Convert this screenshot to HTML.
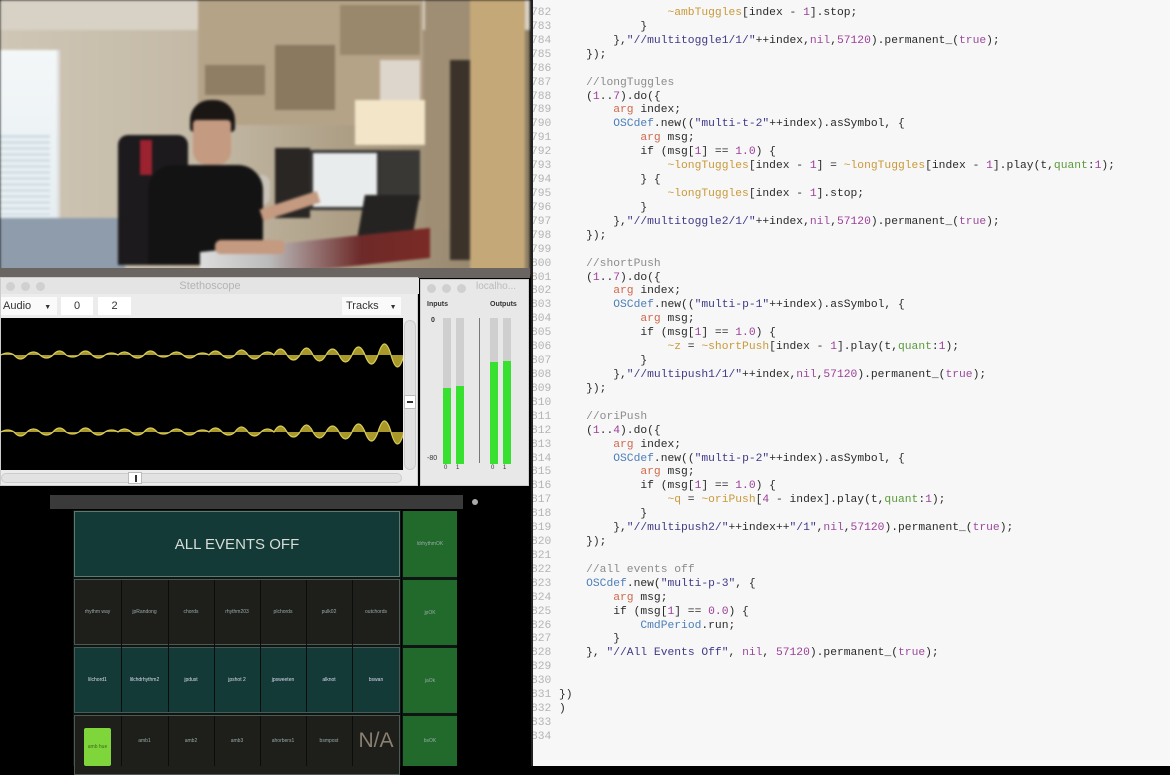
<!DOCTYPE html>
<html><head><meta charset="utf-8">
<style>
*{margin:0;padding:0;box-sizing:border-box}
body{width:1170px;height:766px;overflow:hidden;background:#000;position:relative;font-family:"Liberation Sans",sans-serif}
.a{position:absolute}
#ed{left:533px;top:0;width:637px;height:766px;background:#f7f7f7}
pre{font-family:"Liberation Mono",monospace;font-size:11.3px;line-height:13.92px;position:absolute;margin:0}
#ln{left:-2px;top:7px;color:#b4b4b4;width:20px;overflow:hidden;text-align:right}
#code{left:26px;top:7px;color:#2a2a2a}
.c{color:#8c8c8c}.k{color:#d0684c}.o{color:#4d7fb8}.s{color:#3f3a86}.n{color:#9b3f98}.e{color:#c99a3a}.q{color:#5c9a3a}.p{color:#9b4a9b}
.cell{position:absolute;color:#9aa;font-size:5px;display:flex;align-items:center;justify-content:center;text-align:center}
</style></head><body>

<!-- photo -->
<div class="a" style="left:0;top:0;width:530px;height:276px;background:linear-gradient(90deg,#cfc6b6,#c2b8a4 40%,#a99a80 70%,#8d7e66);overflow:hidden;filter:blur(1.2px)">
 <div class="a" style="left:0;top:0;width:530px;height:30px;background:#d8d2c6"></div>
 <div class="a" style="left:0;top:50px;width:60px;height:170px;background:linear-gradient(#f4f7f8,#e6eef2);border-right:3px solid #ddd"></div>
 <div class="a" style="left:0;top:135px;width:50px;height:80px;background:repeating-linear-gradient(#cfdde4 0 3px,#eef3f5 3px 6px)"></div>
 <div class="a" style="left:198px;top:0;width:225px;height:125px;background:#b5a388"></div>
 <div class="a" style="left:205px;top:65px;width:60px;height:30px;background:#8f7d64"></div>
 <div class="a" style="left:275px;top:45px;width:60px;height:65px;background:#8a785f"></div>
 <div class="a" style="left:340px;top:5px;width:80px;height:50px;background:#9a886c"></div>
 <div class="a" style="left:380px;top:60px;width:40px;height:40px;background:#ddd6cc"></div>
 <div class="a" style="left:355px;top:100px;width:70px;height:45px;background:#f3e6c8"></div>
 <div class="a" style="left:425px;top:0;width:45px;height:230px;background:#9f8e74"></div>
 <div class="a" style="left:450px;top:60px;width:20px;height:200px;background:#3b332a"></div>
 <div class="a" style="left:470px;top:0;width:55px;height:270px;background:#c4a878"></div>
 <div class="a" style="left:0;top:218px;width:125px;height:58px;background:#8e9cab"></div>
 <div class="a" style="left:118px;top:135px;width:70px;height:130px;background:#1c1a1c;border-radius:10px 10px 0 0"></div>
 <div class="a" style="left:140px;top:140px;width:12px;height:35px;background:#9c2230"></div>
 <div class="a" style="left:240px;top:175px;width:30px;height:30px;background:#c9c2b8;border-radius:8px"></div>
 <div class="a" style="left:275px;top:148px;width:35px;height:70px;background:#2a2624"></div>
 <div class="a" style="left:310px;top:150px;width:70px;height:60px;background:#e9ecec;border:3px solid #333"></div>
 <div class="a" style="left:380px;top:150px;width:40px;height:50px;background:#3a3834"></div>
 <div class="a" style="left:360px;top:195px;width:55px;height:55px;background:#252322;transform:skewX(-10deg)"></div>
 <div class="a" style="left:190px;top:100px;width:45px;height:32px;background:#1a1614;border-radius:20px 20px 4px 4px"></div>
 <div class="a" style="left:193px;top:120px;width:38px;height:45px;background:#c49a80;border-radius:4px 4px 14px 14px"></div>
 <div class="a" style="left:148px;top:165px;width:115px;height:100px;background:#141313;border-radius:25px 25px 0 0"></div>
 <div class="a" style="left:260px;top:200px;width:60px;height:12px;background:#c49a80;transform:rotate(-18deg)"></div>
 <div class="a" style="left:200px;top:240px;width:230px;height:30px;background:linear-gradient(90deg,#ddd,#bbb 30%,#6d2a28 70%,#7a2a26);transform:skewY(-6deg)"></div>
 <div class="a" style="left:215px;top:240px;width:70px;height:14px;background:#c49a80;border-radius:6px"></div>
</div>
<div class="a" style="left:0;top:268px;width:530px;height:10px;background:#6a6560"></div>

<!-- stethoscope -->
<div class="a" style="left:0;top:277px;width:418px;height:209px;background:#ececec;border:1px solid #ccc">
 <div class="a" style="left:0;top:0;width:418px;height:16px;background:#e4e4e4;color:#b4b4b4;font-size:11px;text-align:center;line-height:16px">Stethoscope</div>
 <div class="a" style="left:5px;top:4px;width:9px;height:9px;border-radius:50%;background:#d0d0d0"></div>
 <div class="a" style="left:20px;top:4px;width:9px;height:9px;border-radius:50%;background:#d0d0d0"></div>
 <div class="a" style="left:35px;top:4px;width:9px;height:9px;border-radius:50%;background:#d0d0d0"></div>
 <div class="a" style="left:0;top:19px;width:56px;height:18px;background:#fafafa;font-size:11px;line-height:18px;padding-left:2px;color:#333">Audio <span style="font-size:7px;margin-left:10px">▼</span></div>
 <div class="a" style="left:60px;top:19px;width:32px;height:18px;background:#fff;font-size:11px;line-height:18px;text-align:center;color:#333">0</div>
 <div class="a" style="left:97px;top:19px;width:33px;height:18px;background:#fff;font-size:11px;line-height:18px;text-align:center;color:#333">2</div>
 <div class="a" style="left:341px;top:19px;width:59px;height:18px;background:#fafafa;font-size:11px;line-height:18px;padding-left:4px;color:#333">Tracks <span style="font-size:7px;margin-left:8px">▼</span></div>
 <div class="a" style="left:0;top:40px;width:402px;height:152px;background:#000">
  <svg width="402" height="152" style="position:absolute;left:0;top:0">
   <g fill="#a8982a" stroke="#d8cc5a" stroke-width="1.2">
   <path transform="translate(0,37)" d="M0,0 Q6.5,-4 13,0 Q19.5,8 26,0 Q32.5,-6 39,0 Q45.5,6 52,0 Q58.5,-8 65,0 Q71.5,4 78,0 Q84.5,-8 91,0 Q97.5,6 104,0 Q110.5,-4 117,0 Q123.5,-6 130,0 Q136.5,6 143,0 Q149.5,-8 156,0 Q162.5,4 169,0 Q175.5,-6 182,0 Q188.5,6 195,0 Q201.5,-4 208,0 Q214.5,-8 221,0 Q227.5,6 234,0 Q240.5,-10 247,0 Q253.5,8 260,0 Q266.5,-6 273,0 Q279.5,-12 286,0 Q292.5,10 299,0 Q305.5,-14 312,0 Q318.5,12 325,0 Q331.5,-12 338,0 Q344.5,14 351,0 Q357.5,-16 364,0 Q370.5,18 377,0 Q383.5,-22 390,0 Q396.5,24 403,0"/>
   <path transform="translate(0,114)" d="M0,0 Q6.5,-4 13,0 Q19.5,8 26,0 Q32.5,-6 39,0 Q45.5,6 52,0 Q58.5,-8 65,0 Q71.5,4 78,0 Q84.5,-8 91,0 Q97.5,6 104,0 Q110.5,-4 117,0 Q123.5,-6 130,0 Q136.5,6 143,0 Q149.5,-8 156,0 Q162.5,4 169,0 Q175.5,-6 182,0 Q188.5,6 195,0 Q201.5,-4 208,0 Q214.5,-8 221,0 Q227.5,6 234,0 Q240.5,-10 247,0 Q253.5,8 260,0 Q266.5,-6 273,0 Q279.5,-12 286,0 Q292.5,10 299,0 Q305.5,-14 312,0 Q318.5,12 325,0 Q331.5,-12 338,0 Q344.5,14 351,0 Q357.5,-16 364,0 Q370.5,18 377,0 Q383.5,-22 390,0 Q396.5,24 403,0"/>
   </g>
  </svg>
 </div>
 <div class="a" style="left:403px;top:42px;width:12px;height:150px;background:#e2e2e2;border:1px solid #ccc;border-radius:6px"></div>
 <div class="a" style="left:403px;top:117px;width:12px;height:14px;background:#fff;border:1px solid #bbb"><div style="margin:5px 2px;height:2px;background:#333"></div></div>
 <div class="a" style="left:0;top:195px;width:401px;height:10px;background:#e2e2e2;border:1px solid #ccc;border-radius:5px"></div>
 <div class="a" style="left:127px;top:194px;width:14px;height:12px;background:#fff;border:1px solid #bbb"><div style="margin:2px 6px;width:2px;height:7px;background:#333"></div></div>
</div>

<!-- localhost -->
<div class="a" style="left:420px;top:279px;width:109px;height:207px;background:#e8e8e8;border:1px solid #ccc">
 <div class="a" style="left:6px;top:4px;width:9px;height:9px;border-radius:50%;background:#d0d0d0"></div>
 <div class="a" style="left:21px;top:4px;width:9px;height:9px;border-radius:50%;background:#d0d0d0"></div>
 <div class="a" style="left:36px;top:4px;width:9px;height:9px;border-radius:50%;background:#d0d0d0"></div>
 <div class="a" style="left:55px;top:1px;color:#bbb;font-size:10px">localho...</div>
 <div class="a" style="left:6px;top:21px;font-size:7px;font-weight:bold;color:#333">Inputs</div>
 <div class="a" style="left:69px;top:21px;font-size:7px;font-weight:bold;color:#333">Outputs</div>
 <div class="a" style="left:10px;top:37px;font-size:7px;font-weight:bold;color:#333">0</div>
 <div class="a" style="left:6px;top:175px;font-size:7px;color:#333">-80</div>
 <div class="a" style="left:22px;top:38px;width:8px;height:146px;background:#cfcfcf"><div class="a" style="bottom:0;width:8px;height:76px;background:#38e030"></div></div>
 <div class="a" style="left:35px;top:38px;width:8px;height:146px;background:#cfcfcf"><div class="a" style="bottom:0;width:8px;height:78px;background:#38e030"></div></div>
 <div class="a" style="left:58px;top:38px;width:1px;height:145px;background:#777"></div>
 <div class="a" style="left:69px;top:38px;width:8px;height:146px;background:#cfcfcf"><div class="a" style="bottom:0;width:8px;height:102px;background:#38e030"></div></div>
 <div class="a" style="left:82px;top:38px;width:8px;height:146px;background:#cfcfcf"><div class="a" style="bottom:0;width:8px;height:103px;background:#38e030"></div></div>
 <div class="a" style="left:23px;top:185px;font-size:6px;color:#333;word-spacing:7px">0 1</div>
 <div class="a" style="left:70px;top:185px;font-size:6px;color:#333;word-spacing:7px">0 1</div>
</div>

<!-- control panel -->
<div class="a" style="left:50px;top:495px;width:413px;height:14px;background:#3a3a3a"></div>
<div class="a" style="left:472px;top:499px;width:6px;height:6px;border-radius:50%;background:#aaa"></div>
<div class="a" style="left:73px;top:510px;width:328px;height:256px;background:#0f1512"></div>
<div class="a" style="left:74px;top:511px;width:326px;height:66px;background:#133a36;border:1px solid #5a7a72;color:#d6dcd8;font-size:15px;display:flex;align-items:center;justify-content:center">ALL EVENTS OFF</div>
<div class="a" style="left:74px;top:579px;width:326px;height:66px;border:1px solid #4a5a55;background:#1e1f1b"></div>
<div class="a" style="left:74px;top:647px;width:326px;height:66px;border:1px solid #4a5a55;background:#133a36"></div>
<div class="a" style="left:74px;top:715px;width:326px;height:60px;border:1px solid #4a5a55;background:#1e1f1b"></div>
<div class="a" style="left:402px;top:511px;width:55px;height:255px;background:#0f1512"></div>
<div class="cell" style="left:403px;top:511px;width:54px;height:66px;background:#226a2c">ldrhythmOK</div>
<div class="cell" style="left:403px;top:580px;width:54px;height:65px;background:#226a2c">jpOK</div>
<div class="cell" style="left:403px;top:648px;width:54px;height:65px;background:#226a2c">jaOk</div>
<div class="cell" style="left:403px;top:716px;width:54px;height:50px;background:#226a2c">bsOK</div>

<div class="cell" style="left:75px;top:580px;width:45px;height:64px">rhythm way</div>
<div class="cell" style="left:122px;top:580px;width:45px;height:64px">jpRandong</div>
<div class="cell" style="left:169px;top:580px;width:44px;height:64px">chords</div>
<div class="cell" style="left:215px;top:580px;width:44px;height:64px">rhythm203</div>
<div class="cell" style="left:261px;top:580px;width:44px;height:64px">plchords</div>
<div class="cell" style="left:307px;top:580px;width:44px;height:64px">pulk02</div>
<div class="cell" style="left:353px;top:580px;width:46px;height:64px">outchords</div>
<div class="a" style="left:121px;top:580px;width:1px;height:132px;background:#0a0d0b"></div>
<div class="a" style="left:168px;top:580px;width:1px;height:132px;background:#0a0d0b"></div>
<div class="a" style="left:214px;top:580px;width:1px;height:132px;background:#0a0d0b"></div>
<div class="a" style="left:260px;top:580px;width:1px;height:132px;background:#0a0d0b"></div>
<div class="a" style="left:306px;top:580px;width:1px;height:132px;background:#0a0d0b"></div>
<div class="a" style="left:352px;top:580px;width:1px;height:132px;background:#0a0d0b"></div>
<div class="a" style="left:121px;top:716px;width:1px;height:50px;background:#0a0d0b"></div>
<div class="a" style="left:168px;top:716px;width:1px;height:50px;background:#0a0d0b"></div>
<div class="a" style="left:214px;top:716px;width:1px;height:50px;background:#0a0d0b"></div>
<div class="a" style="left:260px;top:716px;width:1px;height:50px;background:#0a0d0b"></div>
<div class="a" style="left:306px;top:716px;width:1px;height:50px;background:#0a0d0b"></div>
<div class="a" style="left:352px;top:716px;width:1px;height:50px;background:#0a0d0b"></div>
<div class="cell" style="left:75px;top:648px;width:45px;height:64px;color:#dde">lilchord1</div>
<div class="cell" style="left:122px;top:648px;width:45px;height:64px;color:#dde">lilchdrhythm2</div>
<div class="cell" style="left:169px;top:648px;width:44px;height:64px;color:#dde">jpdust</div>
<div class="cell" style="left:215px;top:648px;width:44px;height:64px;color:#dde">jpshot 2</div>
<div class="cell" style="left:261px;top:648px;width:44px;height:64px;color:#dde">jpsweeten</div>
<div class="cell" style="left:307px;top:648px;width:44px;height:64px;color:#dde">alknot</div>
<div class="cell" style="left:353px;top:648px;width:46px;height:64px;color:#dde">bswan</div>
<div class="cell" style="left:84px;top:728px;width:27px;height:38px;background:#7ed63a;border-radius:2px;color:#3a6a1a">amb hue</div>
<div class="cell" style="left:122px;top:716px;width:45px;height:50px">amb1</div>
<div class="cell" style="left:169px;top:716px;width:44px;height:50px">amb2</div>
<div class="cell" style="left:215px;top:716px;width:44px;height:50px">amb3</div>
<div class="cell" style="left:261px;top:716px;width:44px;height:50px">ahorbers1</div>
<div class="cell" style="left:307px;top:716px;width:44px;height:50px">bsmpost</div>
<div class="cell" style="left:353px;top:716px;width:46px;height:50px;font-size:21px;color:#8a8070">N/A</div>

<!-- editor -->
<div id="ed" class="a">
<pre id="ln">782
783
784
785
786
787
788
789
790
791
792
793
794
795
796
797
798
799
800
801
802
803
804
805
806
807
808
809
810
811
812
813
814
815
816
817
818
819
820
821
822
823
824
825
826
827
828
829
830
831
832
833
834</pre>
<pre id="code">                <span class="e">~ambTuggles</span>[index - <span class="n">1</span>].stop;
            }
        },<span class="s">"//multitoggle1/1/"</span>++index,<span class="p">nil</span>,<span class="n">57120</span>).permanent_(<span class="p">true</span>);
    });

    <span class="c">//longTuggles</span>
    (<span class="n">1</span>..<span class="n">7</span>).do({
        <span class="k">arg</span> index;
        <span class="o">OSCdef</span>.new((<span class="s">"multi-t-2"</span>++index).asSymbol, {
            <span class="k">arg</span> msg;
            if (msg[<span class="n">1</span>] == <span class="n">1.0</span>) {
                <span class="e">~longTuggles</span>[index - <span class="n">1</span>] = <span class="e">~longTuggles</span>[index - <span class="n">1</span>].play(t,<span class="q">quant</span>:<span class="n">1</span>);
            } {
                <span class="e">~longTuggles</span>[index - <span class="n">1</span>].stop;
            }
        },<span class="s">"//multitoggle2/1/"</span>++index,<span class="p">nil</span>,<span class="n">57120</span>).permanent_(<span class="p">true</span>);
    });

    <span class="c">//shortPush</span>
    (<span class="n">1</span>..<span class="n">7</span>).do({
        <span class="k">arg</span> index;
        <span class="o">OSCdef</span>.new((<span class="s">"multi-p-1"</span>++index).asSymbol, {
            <span class="k">arg</span> msg;
            if (msg[<span class="n">1</span>] == <span class="n">1.0</span>) {
                <span class="e">~z</span> = <span class="e">~shortPush</span>[index - <span class="n">1</span>].play(t,<span class="q">quant</span>:<span class="n">1</span>);
            }
        },<span class="s">"//multipush1/1/"</span>++index,<span class="p">nil</span>,<span class="n">57120</span>).permanent_(<span class="p">true</span>);
    });

    <span class="c">//oriPush</span>
    (<span class="n">1</span>..<span class="n">4</span>).do({
        <span class="k">arg</span> index;
        <span class="o">OSCdef</span>.new((<span class="s">"multi-p-2"</span>++index).asSymbol, {
            <span class="k">arg</span> msg;
            if (msg[<span class="n">1</span>] == <span class="n">1.0</span>) {
                <span class="e">~q</span> = <span class="e">~oriPush</span>[<span class="n">4</span> - index].play(t,<span class="q">quant</span>:<span class="n">1</span>);
            }
        },<span class="s">"//multipush2/"</span>++index++<span class="s">"/1"</span>,<span class="p">nil</span>,<span class="n">57120</span>).permanent_(<span class="p">true</span>);
    });

    <span class="c">//all events off</span>
    <span class="o">OSCdef</span>.new(<span class="s">"multi-p-3"</span>, {
        <span class="k">arg</span> msg;
        if (msg[<span class="n">1</span>] == <span class="n">0.0</span>) {
            <span class="o">CmdPeriod</span>.run;
        }
    }, <span class="s">"//All Events Off"</span>, <span class="p">nil</span>, <span class="n">57120</span>).permanent_(<span class="p">true</span>);


})
)
</pre>
</div>
<div class="a" style="left:531px;top:0;width:2px;height:766px;background:#222"></div>
</body></html>
